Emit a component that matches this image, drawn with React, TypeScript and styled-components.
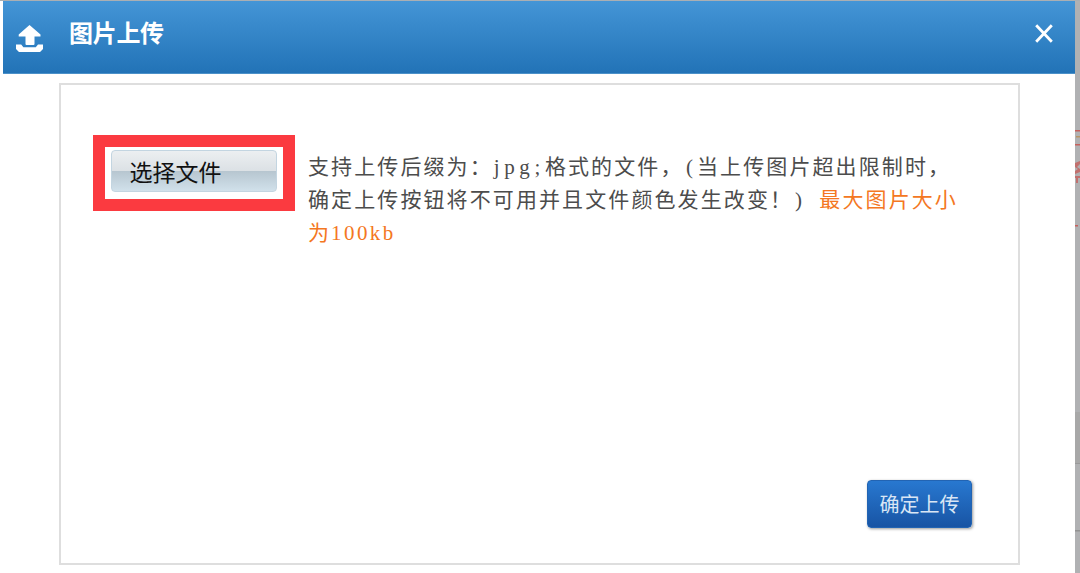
import styled, { createGlobalStyle } from 'styled-components';

function App() {
	return (
		<>
			<GlobalStyle />
			<Page>
				<Dialog>
					<Header>
						<UploadIcon viewBox="0 0 27 27" aria-hidden>
							<path d="M13.5 0L24.5 9.5V11.5H18.5V19Q18.5 20 17.5 20H10.5Q9.5 20 9.5 19V11.5H2.7V9.5Z" />
							<path d="M0 19.5H5.2L7.4 22.3H19.8L22 19.5H27V24L24 27H3L0 24Z" />
						</UploadIcon>
						<Title>图片上传</Title>
						<CloseButton aria-label="关闭">
							<svg viewBox="0 0 18 19" width="18" height="19">
								<path d="M1.2 1.2L16.8 17.8M16.8 1.2L1.2 17.8" stroke="#fff" strokeWidth="2.8" />
							</svg>
						</CloseButton>
					</Header>
					<Panel>
						<FileRow>
							<Highlight>
								<FileButton>选择文件</FileButton>
							</Highlight>
							<Hint>
								支持上传后缀为：<Latin $gap={4.6} $indent={1}>jpg;</Latin>格式的文件，
								<Latin $gap={4} $indent={2.5}>(</Latin>当上传图片超出限制时，
								<br />
								确定上传按钮将不可用并且文件颜色发生改变！<Latin $gap={6} $indent={2}>)&nbsp;</Latin>
								<Limit>
									最大图片大小
									<br />为<Latin $gap={2.4}>100kb</Latin>
								</Limit>
							</Hint>
						</FileRow>
						<ConfirmButton>确定上传</ConfirmButton>
					</Panel>
				</Dialog>
				<Backdrop>
					<svg width="5" height="573" aria-hidden>
						<g fill="#c5605c">
							<rect y="130" width="5" height="1.5" />
							<rect y="136" x="1" width="4" height="1.5" fill="#b99567" />
							<rect y="144" width="5" height="1.5" />
							<path d="M0 163L5 161V164L2 167L5 169V172L0 174V171L3 169L0 167Z" opacity=".8" />
							<path d="M0 176H5V178H3V183H1V178H0Z" opacity=".8" />
							<rect y="225" width="3" height="1.5" />
						</g>
						<rect y="412" width="5" height="51" fill="#a8a8a8" />
						<rect y="463" width="5" height="1" fill="#999" />
						<rect y="530" width="5" height="1.5" fill="#929292" />
					</svg>
				</Backdrop>
			</Page>
		</>
	);
}

export default App;

const GlobalStyle = createGlobalStyle`
	* {
		box-sizing: border-box;
	}

	body {
		margin: 0;
		overflow: hidden;
		background: #fff;
		font-family: 'Noto Sans CJK SC', sans-serif;
	}
`;

const Page = styled.div`
	display: flex;
	height: 573px;
	padding-left: 3px;
	border-top: 1px solid #aaafb3;
`;

const Dialog = styled.div`
	flex: 1;
	background: #fff;
`;

const Header = styled.header`
	display: flex;
	height: 73px;
	padding: 0 22px 0 13px;
	background: linear-gradient(#4495d6, #2273b7);
	border-bottom: 1px solid #4b91c9;
	color: #fff;
`;

const UploadIcon = styled.svg`
	width: 27px;
	height: 27px;
	margin-top: 24px;
	fill: #fff;
`;

const Title = styled.h1`
	margin: 16px 0 0 26px;
	font-size: 24px;
	line-height: 30px;
	font-weight: 700;
	letter-spacing: -0.3px;
`;

const CloseButton = styled.button`
	width: 18px;
	height: 19px;
	margin: 23px 0 0 auto;
	padding: 0;
	border: 0;
	background: transparent;

	svg {
		display: block;
	}
`;

const Panel = styled.section`
	display: flex;
	flex-direction: column;
	justify-content: space-between;
	width: 961px;
	height: 482px;
	margin: 9px 0 0 56px;
	padding: 50px 46px 35px 31.5px;
	border: 2px solid #dedede;
`;

const FileRow = styled.div`
	display: flex;
	align-items: flex-start;
`;

const Highlight = styled.div`
	flex: none;
	width: 202px;
	height: 76px;
	padding: 3px 6px;
	border: 12px solid #fb3a40;
`;

const FileButton = styled.button`
	display: block;
	width: 166px;
	height: 42px;
	padding: 0 0 0 18px;
	border: 1px solid #c3d5e1;
	border-radius: 4px;
	background: linear-gradient(#eceff1, #dce1e5 49%, #b7c6d0 51%, #d1e1eb);
	color: #111;
	font-family: inherit;
	font-size: 23px;
	line-height: 38px;
	text-align: left;
`;

const Hint = styled.p`
	margin: 14px 0 0 13.5px;
	color: #4c4c4c;
	font-size: 21px;
	line-height: 33px;
	letter-spacing: 2.1px;
	white-space: nowrap;
	font-weight: 400;
`;

const Latin = styled.span<{ $gap: number; $indent?: number }>`
	padding-left: ${({ $indent }) => $indent ?? 0}px;
	font-family: 'Liberation Serif', serif;
	line-height: 1;
	letter-spacing: ${({ $gap }) => $gap}px;
`;

const Limit = styled.span`
	color: #f47722;
`;

const ConfirmButton = styled.button`
	align-self: flex-end;
	width: 105px;
	height: 48px;
	padding: 0;
	border: 1px solid #2264b3;
	border-radius: 4px;
	background: linear-gradient(#2878d0, #1854a4);
	box-shadow: 1px 1px 3px rgba(0, 0, 0, 0.4);
	color: #d9e6f5;
	font-family: inherit;
	font-size: 20px;
	line-height: 46px;
`;

const Backdrop = styled.aside`
	width: 5px;
	height: 572px;
	background: #b0b1b3;
	overflow: hidden;

	svg {
		display: block;
		margin-top: -1px;
	}
`;
